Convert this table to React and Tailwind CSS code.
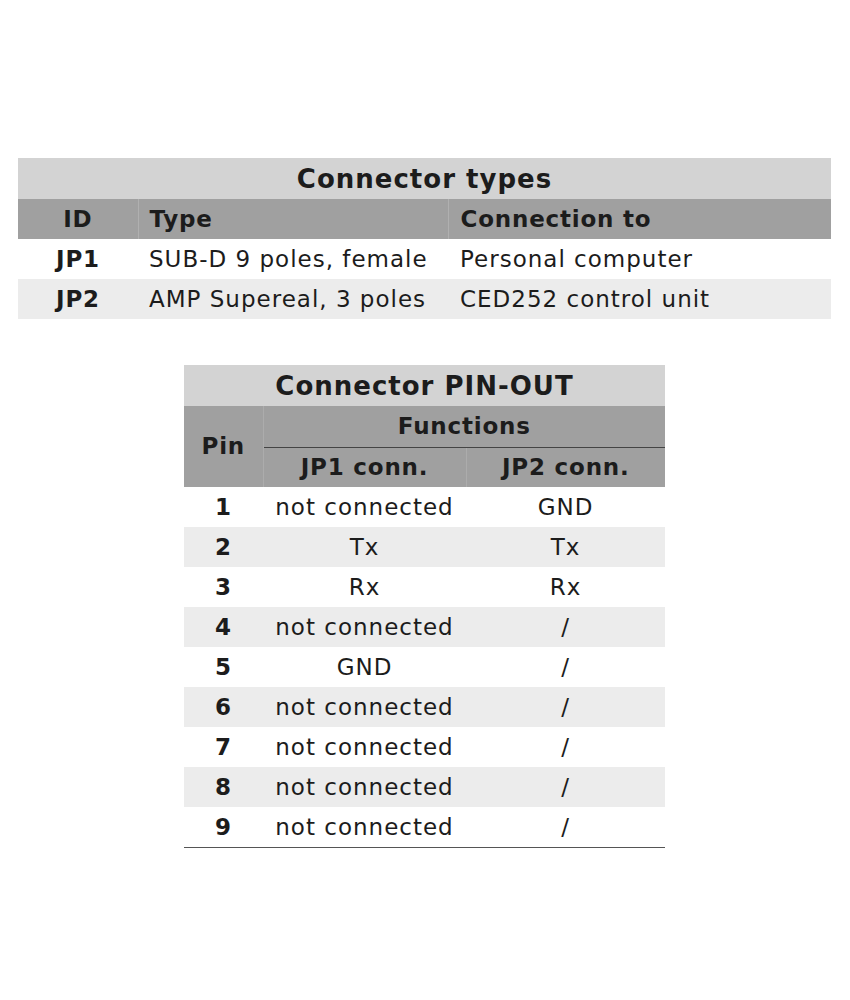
import React from "react";

const types = [
  { id: "JP1", type: "SUB-D 9 poles, female", to: "Personal computer" },
  { id: "JP2", type: "AMP Supereal, 3 poles", to: "CED252 control unit" },
];

const pins = [
  ["1", "not connected", "GND"],
  ["2", "Tx", "Tx"],
  ["3", "Rx", "Rx"],
  ["4", "not connected", "/"],
  ["5", "GND", "/"],
  ["6", "not connected", "/"],
  ["7", "not connected", "/"],
  ["8", "not connected", "/"],
  ["9", "not connected", "/"],
];

export default function App() {
  return (
    <div className="w-[850px] h-[1000px] bg-white text-[#1c1c1c] font-['DejaVu_Sans',Verdana,sans-serif] text-[23px] tracking-[1px]">
      <div className="pt-[158px] px-[18px]">
        <table className="w-[813px] border-collapse table-fixed">
          <colgroup>
            <col className="w-[120px]" />
            <col className="w-[310px]" />
            <col />
          </colgroup>
          <thead>
            <tr className="bg-[#d3d3d3] h-[41px]">
              <th colSpan={3} className="text-[26px] font-bold text-center leading-none">Connector types</th>
            </tr>
            <tr className="bg-[#a0a0a0] h-[40px] tracking-[0.8px]">
              <th className="font-bold text-center border-r border-[#b0b0b0]">ID</th>
              <th className="font-bold text-left pl-[11px] border-r border-[#b0b0b0]">Type</th>
              <th className="font-bold text-left pl-[12px]">Connection to</th>
            </tr>
          </thead>
          <tbody>
            {types.map((r, i) => (
              <tr key={r.id} className={`h-[40px] ${i % 2 ? "bg-[#ececec]" : "bg-white"}`}>
                <td className="font-bold text-center tracking-[0.8px]">{r.id}</td>
                <td className="pl-[11px] whitespace-nowrap">{r.type}</td>
                <td className="pl-[12px] whitespace-nowrap">{r.to}</td>
              </tr>
            ))}
          </tbody>
        </table>
      </div>

      <div className="pt-[46px] pl-[184px]">
        <table className="w-[481px] border-collapse table-fixed border-b border-[#555]">
          <colgroup>
            <col className="w-[79px]" />
            <col className="w-[203px]" />
            <col />
          </colgroup>
          <thead>
            <tr className="bg-[#d3d3d3] h-[41px]">
              <th colSpan={3} className="text-[26px] font-bold text-center leading-none">Connector PIN-OUT</th>
            </tr>
            <tr className="bg-[#a0a0a0] h-[41px] tracking-[0.8px]">
              <th rowSpan={2} className="font-bold text-center border-r border-[#acacac]">Pin</th>
              <th colSpan={2} className="font-bold text-center border-b border-[#444]">Functions</th>
            </tr>
            <tr className="bg-[#a0a0a0] h-[40px] tracking-[0.8px]">
              <th className="font-bold text-center border-r border-[#acacac]">JP1 conn.</th>
              <th className="font-bold text-center">JP2 conn.</th>
            </tr>
          </thead>
          <tbody>
            {pins.map((r, i) => (
              <tr key={r[0]} className={`h-[40px] ${i % 2 ? "bg-[#ececec]" : "bg-white"}`}>
                <td className="font-bold text-center">{r[0]}</td>
                <td className="text-center whitespace-nowrap">{r[1]}</td>
                <td className="text-center">{r[2]}</td>
              </tr>
            ))}
          </tbody>
        </table>
      </div>
    </div>
  );
}
